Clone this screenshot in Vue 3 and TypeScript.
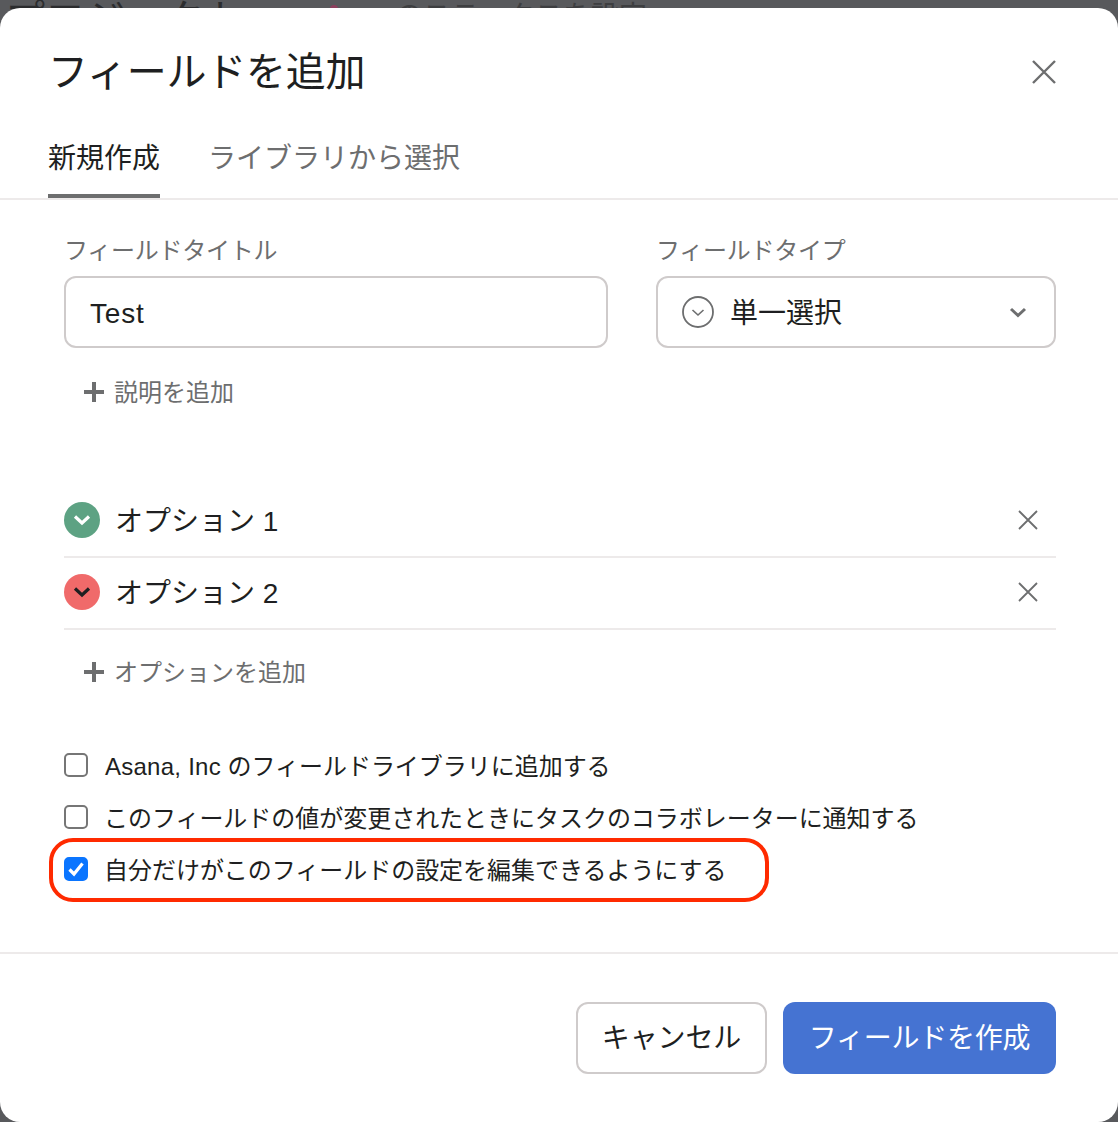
<script setup lang="ts">
interface Opt { label: string; color: string; chevron: string }
const options: Opt[] = [
  { label: 'オプション 1', color: '#5da283', chevron: '#ffffff' },
  { label: 'オプション 2', color: '#f06a6a', chevron: '#1e1f21' }
]
const checks = [
  { latin: 'Asana, Inc', label: ' のフィールドライブラリに追加する', on: false },
  { latin: '', label: 'このフィールドの値が変更されたときにタスクのコラボレーターに通知する', on: false },
  { latin: '', label: '自分だけがこのフィールドの設定を編集できるようにする', on: true }
]
</script>

<template>
  <div class="page">
    <div class="behind">
      <span class="behind-title">プロジェクト</span>
      <span class="behind-mark"></span>
      <span class="behind-sub">のステータスを設定</span>
    </div>
    <div class="modal">
      <header class="head">
        <h1 class="title">フィールドを追加</h1>
        <svg class="close" width="26" height="26" viewBox="0 0 26 26"><path d="M2 2 L24 24 M24 2 L2 24" stroke="#6d6e6f" stroke-width="2.4" fill="none"/></svg>
      </header>
      <nav class="tabs">
        <div class="tab active">新規作成</div>
        <div class="tab">ライブラリから選択</div>
      </nav>
      <section class="body">
        <div class="fields">
          <div class="field">
            <label class="label">フィールドタイトル</label>
            <div class="box"><span class="value-latin">Test</span></div>
          </div>
          <div class="field">
            <label class="label">フィールドタイプ</label>
            <div class="box select">
              <svg class="type-icon" width="32" height="32" viewBox="0 0 32 32"><circle cx="16" cy="16" r="15" stroke="#6d6e6f" stroke-width="1.8" fill="none"/><path d="M10.5 14 L16 19 L21.5 14" stroke="#6d6e6f" stroke-width="1.6" fill="none"/></svg>
              <span class="value">単一選択</span>
              <svg class="caret" width="18" height="12" viewBox="0 0 18 12"><path d="M2 3 L9 9.5 L16 3" stroke="#6d6e6f" stroke-width="3" fill="none"/></svg>
            </div>
          </div>
        </div>
        <div class="add add-desc">
          <svg width="20" height="20" viewBox="0 0 20 20"><path d="M10 0 V20 M0 10 H20" stroke="#6d6e6f" stroke-width="4" fill="none"/></svg>
          <span class="add-text">説明を追加</span>
        </div>
        <ul class="options">
          <li v-for="o in options" :key="o.label" class="option">
            <span class="dot" :style="{ background: o.color }">
              <svg width="20" height="14" viewBox="0 0 20 14"><path d="M3 3.5 L10 10 L17 3.5" :stroke="o.chevron" stroke-width="3.2" fill="none"/></svg>
            </span>
            <span class="opt-label">{{ o.label }}</span>
            <svg class="opt-x" width="20" height="20" viewBox="0 0 20 20"><path d="M1 1 L19 19 M19 1 L1 19" stroke="#6d6e6f" stroke-width="1.8" fill="none"/></svg>
          </li>
        </ul>
        <div class="add add-opt">
          <svg width="20" height="20" viewBox="0 0 20 20"><path d="M10 0 V20 M0 10 H20" stroke="#6d6e6f" stroke-width="4" fill="none"/></svg>
          <span class="add-text">オプションを追加</span>
        </div>
        <div class="checks">
          <div v-for="c in checks" :key="c.label" class="check">
            <span class="box-check" :class="{ on: c.on }">
              <svg v-if="c.on" width="18" height="16" viewBox="0 0 18 16"><path d="M2.5 8.5 L7 13 L15.5 2.5" stroke="#fff" stroke-width="3.2" fill="none"/></svg>
            </span>
            <span class="check-text"><span v-if="c.latin" class="check-latin">{{ c.latin }}</span>{{ c.label }}</span>
          </div>
          <div class="ring"></div>
        </div>
      </section>
      <footer class="foot">
        <button class="btn ghost">キャンセル</button>
        <button class="btn primary">フィールドを作成</button>
      </footer>
    </div>
  </div>
</template>

<style scoped>
.page {
  position: relative;
  width: 1118px;
  height: 1122px;
  overflow: hidden;
  background: #58595c;
  font-family: "Liberation Sans", "Noto Sans CJK JP", sans-serif;
  color: #1e1f21;
  padding-top: 8px;
  box-sizing: border-box;
}
.behind {
  position: absolute;
  top: -5px;
  left: 5px;
  display: flex;
  white-space: nowrap;
}
.behind-title { font-size: 40px; line-height: 48px; width: 325px; color: #2b2c2e; }
.behind-mark {
  width: 8px;
  height: 8px;
  margin-top: 10px;
  margin-right: 57px;
  border-radius: 50%;
  background: #8c3f5d;
}
.behind-sub { font-size: 28px; line-height: 48px; margin-top: -2px; color: #3d3e40; }
.modal {
  position: relative;
  height: 1114px;
  background: #fff;
  border-radius: 20px;
  display: flex;
  flex-direction: column;
}
.head {
  display: flex;
  align-items: center;
  justify-content: space-between;
  padding: 40px 61px 0 48px;
}
.title { margin: 0; font-size: 40px; font-weight: 400; line-height: 48px; letter-spacing: -0.25px; }
.tabs {
  display: flex;
  gap: 48px;
  margin-top: 41px;
  padding-left: 48px;
  border-bottom: 2px solid #edeaea;
}
.tab {
  font-size: 28px;
  line-height: 40px;
  padding: 2px 0 15px;
  border-bottom: 4px solid transparent;
  color: #6d6e6f;
}
.tab.active { color: #1e1f21; border-bottom-color: #6d6e6f; }
.body { flex: 1; padding: 34px 62px 0 64px; }
.fields { display: flex; gap: 48px; }
.field { display: flex; flex-direction: column; gap: 10px; }
.field:first-child { width: 544px; }
.field:last-child { width: 400px; }
.label { font-size: 24px; line-height: 32px; color: #6d6e6f; letter-spacing: -0.25px; padding-top: 1px; margin-bottom: -1px; }
.box {
  height: 72px;
  box-sizing: border-box;
  border: 2px solid #cfcbcb;
  border-radius: 12px;
  display: flex;
  align-items: center;
  padding: 0 24px;
  font-size: 28px;
}
.value-latin { letter-spacing: 0.8px; padding-top: 4px; }
.select { padding: 0 27px 0 24px; }
.type-icon { margin-right: 16px; }
.value { flex: 1; padding-bottom: 2px; }
.add {
  display: flex;
  align-items: center;
  gap: 10px;
  padding-left: 20px;
  font-size: 24px;
  line-height: 32px;
  color: #6d6e6f;
}
.add-text { line-height: 30px; padding-top: 2px; }
.add-desc { margin-top: 28px; }
.options { list-style: none; margin: 78px 0 0; padding: 0; }
.option {
  height: 72px;
  box-sizing: border-box;
  border-bottom: 2px solid #edeaea;
  padding-bottom: 2px;
  display: flex;
  align-items: center;
  font-size: 28px;
}
.dot {
  width: 36px;
  height: 36px;
  border-radius: 50%;
  display: flex;
  align-items: center;
  justify-content: center;
  margin-right: 15px;
}
.opt-label { flex: 1; padding-bottom: 2px; }
.opt-x { margin-right: 18px; }
.add-opt { margin-top: 26px; }
.checks {
  position: relative;
  margin-top: 62px;
  display: flex;
  flex-direction: column;
  gap: 20px;
}
.check {
  display: flex;
  align-items: center;
  gap: 16px;
  font-size: 24px;
  line-height: 32px;
}
.check-text { letter-spacing: -0.03px; line-height: 30px; padding-top: 2px; white-space: pre-wrap; }
.check-latin { letter-spacing: 0.25px; padding-left: 1px; }
.box-check {
  width: 24px;
  height: 24px;
  box-sizing: border-box;
  border: 2px solid #767676;
  border-radius: 5px;
  display: flex;
  align-items: center;
  justify-content: center;
  margin-bottom: 2px;
}
.box-check.on { background: #0a75ff; border-color: #0a75ff; }
.ring {
  position: absolute;
  left: -15px;
  top: 88px;
  width: 720px;
  height: 64px;
  box-sizing: border-box;
  border: 4px solid #ff2a00;
  border-radius: 24px;
  pointer-events: none;
}
.foot {
  border-top: 2px solid #edeaea;
  height: 170px;
  box-sizing: border-box;
  padding: 48px 62px 0 0;
  display: flex;
  justify-content: flex-end;
  gap: 16px;
}
.btn {
  height: 72px;
  border-radius: 12px;
  font: inherit;
  font-size: 28px;
  box-sizing: border-box;
  padding: 0 0 4px;
}
.ghost { width: 191px; background: #fff; border: 2px solid #cfcbcb; color: #1e1f21; letter-spacing: -0.1px; }
.primary { width: 273px; background: #4573d2; border: 0; color: #fff; letter-spacing: -0.25px; }
</style>
